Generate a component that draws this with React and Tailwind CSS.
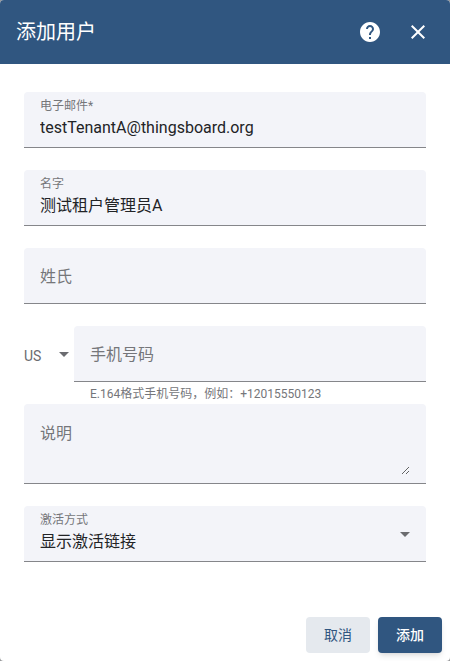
import { MdHelp, MdClose, MdArrowDropDown } from "react-icons/md";

function FilledField({ id, label, value, required }) {
  return (
    <div className="flex h-14 flex-col rounded-t border-b border-[#85868a] bg-[#f3f4f9] px-4 pt-1.5">
      <label htmlFor={id} className="text-xs leading-4 text-[#75767a]">
        {label}
        {required && "*"}
      </label>
      <input
        id={id}
        defaultValue={value}
        required={required}
        className="h-7 w-full bg-transparent text-base leading-7 text-[#222326] outline-none"
      />
    </div>
  );
}

function EmptyField({ id, label, type = "text" }) {
  return (
    <div className="grid h-14 items-center rounded-t border-b border-[#85868a] bg-[#f3f4f9] px-4 pt-0.5">
      <label htmlFor={id} className="col-start-1 row-start-1 text-base leading-6 text-[#75767a]">
        {label}
      </label>
      <input
        id={id}
        type={type}
        className="col-start-1 row-start-1 h-6 w-full bg-transparent text-base outline-none"
      />
    </div>
  );
}

export default function App() {
  return (
    <div className="min-h-screen bg-[#98999b] font-['Roboto','Noto_Sans_CJK_SC',sans-serif]">
      <form
        role="dialog"
        aria-labelledby="dialog-title"
        className="flex min-h-screen flex-col overflow-hidden rounded bg-white"
      >
        <header className="flex h-16 items-center bg-[#305680] px-4 text-white">
          <h2 id="dialog-title" className="flex-1 text-xl leading-8">
            添加用户
          </h2>
          <div className="flex gap-6">
            <button type="button" aria-label="帮助">
              <MdHelp className="size-6" />
            </button>
            <button type="button" aria-label="关闭" className="mr-1">
              <MdClose className="size-6" />
            </button>
          </div>
        </header>

        <div className="flex flex-1 flex-col gap-[22px] px-6 pt-7">
          <FilledField id="email" label="电子邮件" value="testTenantA@thingsboard.org" required />
          <FilledField id="first-name" label="名字" value="测试租户管理员A" />
          <EmptyField id="last-name" label="姓氏" />

          <div>
            <div className="flex">
              <div className="grid w-[50px] shrink-0 items-center">
                <select
                  aria-label="国家代码"
                  defaultValue="US"
                  className="col-start-1 row-start-1 h-6 w-full appearance-none bg-transparent pt-1 text-sm leading-5 text-[#6b6c70] outline-none"
                >
                  <option>US</option>
                </select>
                <MdArrowDropDown className="pointer-events-none col-start-1 row-start-1 -mr-0.5 size-6 justify-self-end text-[#6b6c70]" />
              </div>
              <div className="min-w-0 flex-1">
                <EmptyField id="phone" label="手机号码" type="tel" />
              </div>
            </div>
            <p className="-mb-[22px] ml-[50px] h-[22px] px-4 pt-1 text-xs leading-4 text-[#75767a]">
              E.164格式手机号码，例如：+12015550123
            </p>
          </div>

          <div className="grid h-20 rounded-t border-b border-[#85868a] bg-[#f3f4f9] px-4 pt-[18px] pb-2">
            <label htmlFor="description" className="col-start-1 row-start-1 text-base leading-6 text-[#75767a]">
              说明
            </label>
            <textarea
              id="description"
              className="col-start-1 row-start-1 h-full w-full resize bg-transparent text-base leading-6 outline-none"
            />
          </div>

          <div className="grid h-14 grid-cols-[1fr_auto] items-center rounded-t border-b border-[#85868a] bg-[#f3f4f9] px-4">
            <div className="col-span-2 col-start-1 row-start-1 flex h-full flex-col pt-1.5">
              <label htmlFor="activation" className="text-xs leading-4 text-[#75767a]">
                激活方式
              </label>
              <select
                id="activation"
                className="h-7 w-full appearance-none bg-transparent text-base leading-7 text-[#222326] outline-none"
              >
                <option>显示激活链接</option>
              </select>
            </div>
            <MdArrowDropDown className="pointer-events-none col-start-2 row-start-1 -mr-[7px] size-6 text-[#6b6c70]" />
          </div>
        </div>

        <footer className="flex justify-end gap-2 p-2 pt-12 text-sm">
          <button type="button" className="h-9 w-16 rounded bg-[#e5e9ee] text-[#305680]">
            取消
          </button>
          <button type="submit" className="h-9 w-16 rounded bg-[#305680] font-medium text-white shadow-md">
            添加
          </button>
        </footer>
      </form>
    </div>
  );
}
